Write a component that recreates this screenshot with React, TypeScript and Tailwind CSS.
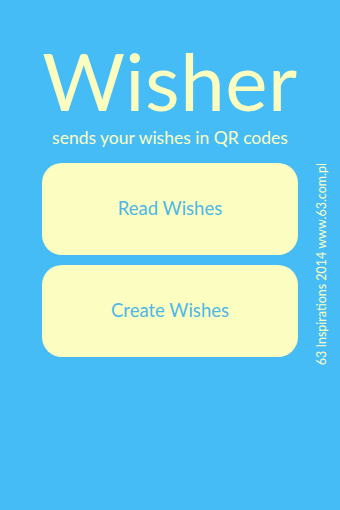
export default function App() {
  return (
    <div className="w-[340px] h-[510px] bg-[#46bcf6] overflow-hidden" style={{ fontFamily: "Lato, 'Noto Sans', sans-serif" }}>
      <div className="pt-[44px] flex flex-col items-center">
        <div className="text-[80px] leading-[72px] font-normal text-[#fbfcbf] tracking-[0.5px]">Wisher</div>
        <div className="mt-[11px] text-[17.5px] leading-[22px] font-normal text-[#fbfcbf]">sends your wishes in QR codes</div>
      </div>
      <div className="flex mt-[14px]">
        <div className="ml-[42px] w-[256px] flex flex-col gap-[10px]">
          <button className="h-[92px] rounded-[20px] bg-[#fcfdc0] text-[#4cb8ea] text-[18.5px] font-normal flex items-center justify-center">
            Read Wishes
          </button>
          <button className="h-[92px] rounded-[20px] bg-[#fcfdc0] text-[#4cb8ea] text-[18.5px] font-normal flex items-center justify-center">
            Create Wishes
          </button>
        </div>
        <div className="ml-[17px] flex items-end">
          <div className="[writing-mode:vertical-rl] rotate-180 text-[12.5px] leading-[14px] text-[#fbfcbf] whitespace-nowrap">
            63 Inspirations 2014 www.63.com.pl
          </div>
        </div>
      </div>
    </div>
  );
}
